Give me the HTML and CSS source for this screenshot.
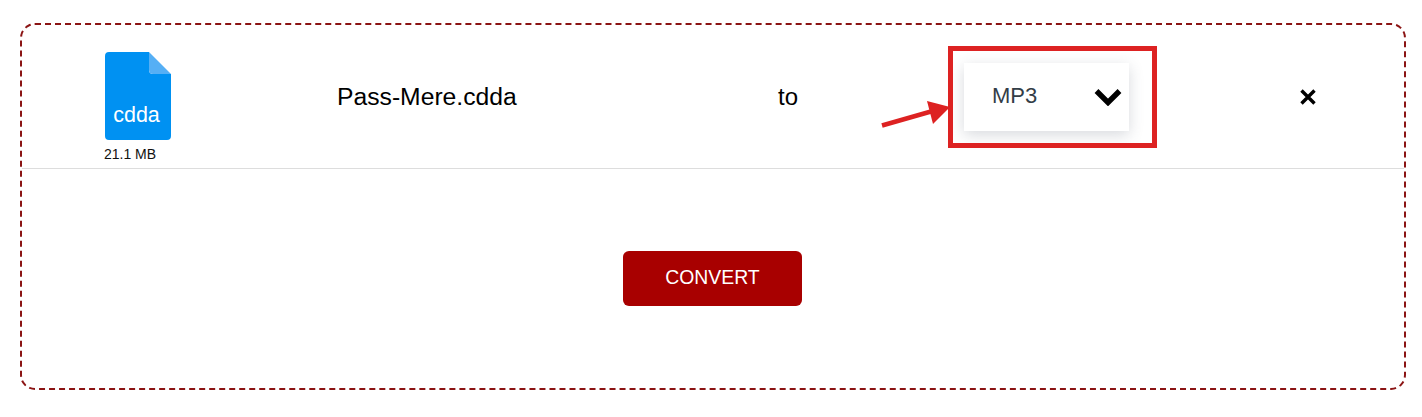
FILE: index.html
```html
<!DOCTYPE html>
<html lang="en">
<head>
  <meta charset="UTF-8">
  <title>Convert file</title>
  <link rel="stylesheet" href="styles.css">
</head>
<body>

  <div class="upload-box">
    <div class="file-row">
      <div class="file-info">
        <div class="file-icon">
          <svg width="66" height="88" viewBox="0 0 66 88">
            <path d="M4 0H44V18a4 4 0 0 0 4 4H66V84a4 4 0 0 1-4 4H4a4 4 0 0 1-4-4V4a4 4 0 0 1 4-4Z" fill="#0091f2"/>
            <path d="M44 0L66 22H48a4 4 0 0 1-4-4Z" fill="#55aff5"/>
          </svg>
          <span class="file-ext">cdda</span>
        </div>
        <div class="file-size">21.1 MB</div>
      </div>

      <div class="file-name">Pass-Mere.cdda</div>
      <div class="file-to">to</div>

      <div class="format-wrap">
        <div class="format-select">
          <span>MP3</span>
          <svg class="chevron" width="28" height="18" viewBox="0 0 28 18">
            <path d="M2.5 3L14 14.5L25.5 3" fill="none" stroke="#000" stroke-width="5.4"/>
          </svg>
        </div>
        <div class="highlight"></div>
        <svg class="arrow" width="70" height="27" viewBox="0 0 70 27">
          <path d="M1 24.5L50 10.5" fill="none" stroke="#dd2222" stroke-width="4.5"/>
          <path d="M46 0L69 6L52 23Z" fill="#dd2222"/>
        </svg>
      </div>

      <button class="remove">
        <svg width="18" height="16" viewBox="0 0 18 16">
          <path d="M2.5 1.5L15.5 14.5M15.5 1.5L2.5 14.5" fill="none" stroke="#000" stroke-width="3.4"/>
        </svg>
      </button>
    </div>

    <div class="actions">
      <button class="convert">CONVERT</button>
    </div>
  </div>

</body>
</html>
```

FILE: styles.css
```css
body {
  font-family: "Liberation Sans", Arial, sans-serif;
  background-color: #fff;
  margin: 0;
  padding: 23px 16px 27px 20px;
}

.upload-box {
  height: 363px;
  border: 2px dashed #8b1414;
  border-radius: 15px;
}

.file-row {
  display: grid;
  grid-template-columns: 232px 358px 352px 165px 1fr;
  align-items: center;
  height: 143px;
  border-bottom: 1px solid #ddd;
}

.file-info {
  display: flex;
  flex-direction: column;
  align-items: center;
  padding-top: 21px;
}

.file-icon {
  position: relative;
  width: 66px;
  height: 88px;
}

.file-icon svg {
  display: block;
}

.file-ext {
  position: absolute;
  left: 0;
  right: 3px;
  top: 51px;
  text-align: center;
  color: #fff;
  font-size: 21.5px;
  line-height: 24px;
}

.file-size {
  margin: 6px 16px 0 0;
  font-size: 14px;
  line-height: 16px;
  color: #111;
}

.file-name {
  padding-left: 83px;
  font-size: 24.7px;
  color: #000;
}

.file-to {
  text-align: center;
  font-size: 24px;
  color: #000;
}

.format-wrap {
  position: relative;
  height: 68px;
}

.format-select {
  display: flex;
  align-items: center;
  justify-content: space-between;
  height: 68px;
  padding: 0 7px 0 28px;
  background: #fff;
  box-shadow: 0 4px 14px rgba(60, 70, 90, 0.2);
  font-size: 22px;
  color: #333d47;
}

.format-select span {
  margin-bottom: 2px;
}

.highlight {
  position: absolute;
  left: -16px;
  right: -28px;
  top: -17px;
  bottom: -17px;
  border: 5px solid #dd2222;
}

.arrow {
  position: absolute;
  left: -83px;
  top: 38px;
}

.remove {
  justify-self: start;
  margin-left: 170px;
  padding: 0;
  border: none;
  background: none;
  line-height: 0;
}

.actions {
  display: flex;
  justify-content: center;
  padding: 82px 1px 0 0;
}

.convert {
  width: 179px;
  height: 55px;
  padding-bottom: 3px;
  border: none;
  border-radius: 6px;
  background-color: #a80000;
  color: #fff;
  font-family: inherit;
  font-size: 19.4px;
}
```
